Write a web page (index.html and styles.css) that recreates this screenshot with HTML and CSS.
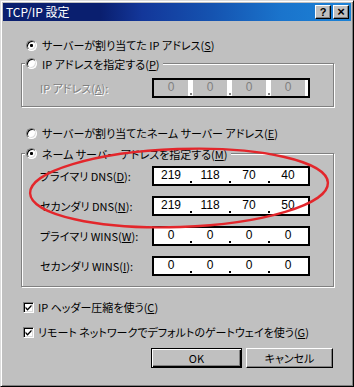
FILE: index.html
```html
<!DOCTYPE html>
<html lang="ja">
<head>
<meta charset="utf-8">
<title>TCP/IP 設定</title>
<link rel="stylesheet" href="styles.css">
</head>
<body>
<div class="window">
  <div class="titlebar">
    <span class="title">TCP/IP 設定</span>
    <div class="tbtns">
      <span class="tbtn">?</span>
      <span class="tbtn tbtn-x">×</span>
    </div>
  </div>
  <div class="content">
    <div class="opt opt-top"><span class="rb checked"></span><span>サーバーが割り当てた IP アドレス(<u>S</u>)</span></div>

    <fieldset class="group group-ip">
      <legend><span class="opt"><span class="rb"></span><span>IP アドレスを指定する(<u>P</u>)</span></span></legend>
      <div class="rows">
        <div class="frow disabled">
          <span class="lbl">IP アドレス(<u>A</u>):</span>
          <div class="ipbox">
            <span class="seg">0</span><span class="dot"><i></i></span>
            <span class="seg">0</span><span class="dot"><i></i></span>
            <span class="seg">0</span><span class="dot"><i></i></span>
            <span class="seg">0</span>
          </div>
        </div>
      </div>
    </fieldset>

    <div class="opt opt-top opt-dns"><span class="rb"></span><span>サーバーが割り当てたネーム サーバー アドレス(<u>E</u>)</span></div>

    <fieldset class="group group-dns">
      <legend><span class="opt"><span class="rb checked"></span><span>ネーム サーバー アドレスを指定する(<u>M</u>)</span></span></legend>
      <div class="rows">
        <div class="frow">
          <span class="lbl">プライマリ DNS(<u>D</u>):</span>
          <div class="ipbox">
            <span class="seg">219</span><span class="dot"><i></i></span>
            <span class="seg">118</span><span class="dot"><i></i></span>
            <span class="seg">70</span><span class="dot"><i></i></span>
            <span class="seg">40</span>
          </div>
        </div>
        <div class="frow">
          <span class="lbl">セカンダリ DNS(<u>N</u>):</span>
          <div class="ipbox">
            <span class="seg">219</span><span class="dot"><i></i></span>
            <span class="seg">118</span><span class="dot"><i></i></span>
            <span class="seg">70</span><span class="dot"><i></i></span>
            <span class="seg">50</span>
          </div>
        </div>
        <div class="frow">
          <span class="lbl">プライマリ WINS(<u>W</u>):</span>
          <div class="ipbox">
            <span class="seg">0</span><span class="dot"><i></i></span>
            <span class="seg">0</span><span class="dot"><i></i></span>
            <span class="seg">0</span><span class="dot"><i></i></span>
            <span class="seg">0</span>
          </div>
        </div>
        <div class="frow">
          <span class="lbl">セカンダリ WINS(<u>I</u>):</span>
          <div class="ipbox">
            <span class="seg">0</span><span class="dot"><i></i></span>
            <span class="seg">0</span><span class="dot"><i></i></span>
            <span class="seg">0</span><span class="dot"><i></i></span>
            <span class="seg">0</span>
          </div>
        </div>
      </div>
    </fieldset>

    <div class="chk chk-1"><span class="cb"><svg width="9" height="9" viewBox="0 0 9 9"><path d="M1.5 3.5 L3.5 5.8 L7.5 1.5 L7.5 3.5 L3.5 7.8 L1.5 5.5 Z" fill="#000"/></svg></span><span>IP ヘッダー圧縮を使う(<u>C</u>)</span></div>
    <div class="chk chk-2"><span class="cb"><svg width="9" height="9" viewBox="0 0 9 9"><path d="M1.5 3.5 L3.5 5.8 L7.5 1.5 L7.5 3.5 L3.5 7.8 L1.5 5.5 Z" fill="#000"/></svg></span><span>リモート ネットワークでデフォルトのゲートウェイを使う(<u>G</u>)</span></div>

    <div class="btns">
      <span class="btn btn-default">OK</span>
      <span class="btn">キャンセル</span>
    </div>
  </div>
</div>
<svg class="mark" width="354" height="387" viewBox="0 0 354 387">
  <ellipse cx="179" cy="188" rx="149" ry="39" transform="rotate(-2 179 188)" fill="none" stroke="#e3262b" stroke-width="2.4"/>
</svg>
</body>
</html>
```

FILE: styles.css
```css
* { box-sizing: border-box; }
html, body { margin: 0; padding: 0; }
body {
  width: 354px;
  height: 387px;
  position: relative;
  overflow: hidden;
  background: #c0c0c0;
  color: #000;
  font-family: "Noto Sans CJK JP", "Liberation Sans", sans-serif;
  font-size: 11px;
  font-feature-settings: "palt" 1;
}
u { text-decoration: underline; text-underline-offset: 1px; }

.window {
  width: 354px;
  height: 387px;
  display: flex;
  flex-direction: column;
  padding: 2px;
  background: #c0c0c0;
  border: 1px solid;
  border-color: #dcdcdc #000 #000 #dcdcdc;
  box-shadow: inset 1px 1px #fff, inset -1px -1px #808080;
}

.titlebar {
  height: 18px;
  flex: none;
  display: flex;
  align-items: center;
  justify-content: space-between;
  padding: 0 2px 0 3px;
  color: #fff;
  background: linear-gradient(90deg, #0a1f6f 0%, #0a1f6f 28%, #13379a 40%, #1553b0 60%, #1a74cc 80%, #1c82d6 100%);
}
.title { font-size: 12px; line-height: 14px; }
.tbtns { display: flex; gap: 2px; }
.tbtn {
  width: 16px;
  height: 14px;
  display: flex;
  align-items: center;
  justify-content: center;
  background: #c0c0c0;
  color: #000;
  border: 1px solid;
  border-color: #fff #000 #000 #fff;
  box-shadow: inset -1px -1px #808080;
  font: bold 11px/12px "Liberation Sans", sans-serif;
}
.tbtn-x { font-size: 13px; }

.content {
  flex: 1;
  display: flex;
  flex-direction: column;
  padding: 18px 17px 0 18px;
}

.opt {
  display: flex;
  align-items: center;
  height: 12px;
  line-height: 12px;
  white-space: nowrap;
}
.opt-top { margin-left: 5px; }
.opt-dns { margin-top: 20px; }

.rb {
  flex: none;
  position: relative;
  width: 11px;
  height: 11px;
  margin-right: 5px;
  border-radius: 50%;
  background: #fff;
  border: 1px solid;
  border-color: #808080 #fff #fff #808080;
  box-shadow: inset 1px 1px #000, inset -1px -1px #dcdcdc;
}
.rb.checked::after {
  content: "";
  position: absolute;
  left: 3px;
  top: 3px;
  width: 3px;
  height: 3px;
  border-radius: 1px;
  background: #000;
}

.group {
  margin: 6px 0 0 0;
  padding: 8px 0 8px 0;
  min-width: 0;
  border: 1px solid #808080;
  box-shadow: inset 1px 1px #fff, 1px 1px #fff;
}
.group legend {
  margin-left: 3px;
  padding: 0 3px 0 1px;
  height: 13px;
  background: #c0c0c0;
}
.group legend .opt { height: 13px; }
.group-dns { margin-top: 8px; padding: 6px 0 10px 0; }

.rows {
  display: flex;
  flex-direction: column;
  gap: 10px;
  padding-left: 18px;
}
.frow {
  display: flex;
  align-items: center;
  height: 20px;
}
.lbl {
  width: 112px;
  flex: none;
  white-space: nowrap;
  line-height: 12px;
}

.ipbox {
  width: 158px;
  height: 20px;
  flex: none;
  display: flex;
  padding-right: 3px;
  background: #fff;
  border: 2px solid #000;
  font-family: "Liberation Sans", sans-serif;
  font-size: 12px;
}
.seg {
  width: 34px;
  flex: none;
  text-align: center;
  line-height: 14px;
}
.dot {
  width: 5px;
  flex: none;
  display: flex;
  align-items: flex-end;
  justify-content: center;
  padding-bottom: 1px;
}
.dot i { display: block; width: 2px; height: 2px; background: #000; }

.disabled .lbl { color: #808080; text-shadow: 1px 1px #fff; }
.disabled .seg { background: #c0c0c0; color: #808080; }
.disabled .dot i { background: #808080; }

.chk {
  display: flex;
  align-items: center;
  height: 12px;
  line-height: 12px;
  white-space: nowrap;
  margin-left: 2px;
}
.chk-1 { margin-top: 14px; }
.chk-2 { margin-top: 13px; }
.cb {
  flex: none;
  width: 11px;
  height: 11px;
  margin-right: 4px;
  display: flex;
  align-items: center;
  justify-content: center;
  background: #fff;
  border: 1px solid;
  border-color: #808080 #fff #fff #808080;
  box-shadow: inset 1px 1px #000, inset -1px -1px #dcdcdc;
}
.cb svg { display: block; }

.btns {
  display: flex;
  justify-content: flex-end;
  gap: 4px;
  margin-top: 10px;
  padding-right: 1px;
}
.btn {
  width: 87px;
  height: 20px;
  display: flex;
  align-items: center;
  justify-content: center;
  background: #c0c0c0;
  border: 1px solid;
  border-color: #fff #000 #000 #fff;
  box-shadow: inset -1px -1px #808080;
  line-height: 12px;
}
.btn-default {
  width: 91px;
  border: 1px solid #000;
  box-shadow: inset 1px 1px #fff, inset -1px -1px #000, inset -2px -2px #808080;
}

.mark {
  position: absolute;
  left: 0;
  top: 0;
  pointer-events: none;
}
```
